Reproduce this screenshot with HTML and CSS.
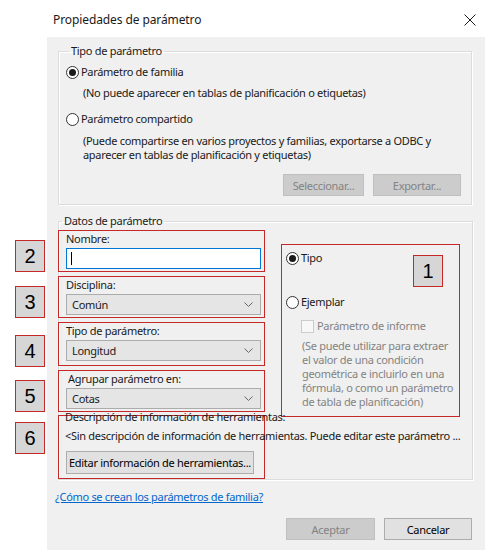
FILE: index.html
```html
<!DOCTYPE html>
<html lang="es">
  <head>
    <title>Propiedades de parámetro</title>
    <meta charset="UTF-8" />
    <meta name="viewport" content="width=device-width, initial-scale=1.0" />
    <link rel="stylesheet" href="styles.css">
  </head>
  <body>
    <div class="dialog">
      <div class="titlebar">
        <span class="title">Propiedades de parámetro</span>
        <svg class="close" width="12" height="12" viewBox="0 0 12 12">
          <path d="M0.5 0.5 L11.5 11.5 M11.5 0.5 L0.5 11.5" stroke="#1a1a1a" stroke-width="1" fill="none" />
        </svg>
      </div>

      <div class="body">
        <!-- Tipo de parámetro -->
        <fieldset class="group group-type">
          <legend>Tipo de parámetro</legend>
          <div class="option"><span class="radio checked"></span>Parámetro de familia</div>
          <p class="note note-first">(No puede aparecer en tablas de planificación o etiquetas)</p>
          <div class="option option-shared"><span class="radio"></span>Parámetro compartido</div>
          <p class="note">(Puede compartirse en varios proyectos y familias, exportarse a ODBC y<br />aparecer en tablas de planificación y etiquetas)</p>
          <div class="actions">
            <button class="btn btn-select" disabled>Seleccionar...</button>
            <button class="btn btn-export" disabled>Exportar...</button>
          </div>
        </fieldset>

        <!-- Datos de parámetro -->
        <fieldset class="group group-data">
          <legend>Datos de parámetro</legend>
          <div class="data-grid">
            <div class="fields">
              <div class="field">
                <span class="badge">2</span>
                <div class="field-label">Nombre:</div>
                <div class="textbox"><span class="caret"></span></div>
              </div>
              <div class="field">
                <span class="badge">3</span>
                <div class="field-label">Disciplina:</div>
                <div class="combo">
                  <span>Común</span>
                  <svg class="chevron" width="9" height="5" viewBox="0 0 9 5"><path d="M0.5 0.5 L4.5 4.5 L8.5 0.5" stroke="#666" fill="none" /></svg>
                </div>
              </div>
              <div class="field field-tall">
                <span class="badge badge-low">4</span>
                <div class="field-label">Tipo de parámetro:</div>
                <div class="combo">
                  <span>Longitud</span>
                  <svg class="chevron" width="9" height="5" viewBox="0 0 9 5"><path d="M0.5 0.5 L4.5 4.5 L8.5 0.5" stroke="#666" fill="none" /></svg>
                </div>
              </div>
              <div class="field">
                <span class="badge">5</span>
                <div class="field-label field-label-shift">Agrupar parámetro en:</div>
                <div class="combo">
                  <span>Cotas</span>
                  <svg class="chevron" width="9" height="5" viewBox="0 0 9 5"><path d="M0.5 0.5 L4.5 4.5 L8.5 0.5" stroke="#666" fill="none" /></svg>
                </div>
              </div>
            </div>

            <div class="kind">
              <span class="badge badge-one">1</span>
              <div class="option"><span class="radio checked"></span>Tipo</div>
              <div class="option option-instance"><span class="radio"></span>Ejemplar</div>
              <div class="check-row"><span class="checkbox"></span>Parámetro de informe</div>
              <p class="kind-note">(Se puede utilizar para extraer<br />el valor de una condición<br />geométrica e incluirlo en una<br />fórmula, o como un parámetro<br />de tabla de planificación)</p>
            </div>
          </div>

          <div class="field field-desc">
            <span class="badge badge-desc">6</span>
            <div class="field-label desc-label">Descripción de información de herramientas:</div>
            <div class="desc-text">&lt;Sin descripción de información de herramientas. Puede editar este parámetro ...</div>
            <button class="btn btn-tooltip">Editar información de herramientas...</button>
          </div>
        </fieldset>

        <a class="help" href="#">¿Cómo se crean los parámetros de familia?</a>

        <div class="footer">
          <button class="btn btn-ok" disabled>Aceptar</button>
          <button class="btn btn-cancel">Cancelar</button>
        </div>
      </div>
    </div>
  </body>
</html>
```

FILE: styles.css
```css
body {
  margin: 0;
  background: #fff;
  font-family: "Noto Sans", "Open Sans", sans-serif;
  font-size: 11px;
  letter-spacing: -0.3px;
  color: #1a1a1a;
}
.dialog {
  margin-left: 47px;
  width: 438px;
}
.titlebar {
  height: 37px;
  display: flex;
  align-items: center;
  justify-content: space-between;
  padding: 0 9px 0 6px;
  background: #fff;
}
.title {
  font-size: 12px;
  letter-spacing: -0.1px;
  margin-top: 2px;
}
.close {
  margin-top: 3px;
}
.body {
  background: #f0f0f0;
  padding: 6px 13px 10px 11px;
}
.group {
  margin: 0;
  border: 1px solid #dcdcdc;
  box-shadow: inset 1px 1px 0 #fff, 1px 1px 0 #fff;
}
.group legend {
  padding: 0 2px;
  margin-left: 3px;
  line-height: 16px;
}
.group-type {
  padding: 5px 10px 8px 7px;
}
.option {
  display: flex;
  align-items: center;
  line-height: 16px;
}
.radio {
  width: 11px;
  height: 11px;
  border: 1px solid #333;
  border-radius: 50%;
  background: #fff;
  margin-right: 2px;
  position: relative;
  flex: none;
}
.radio.checked::after {
  content: "";
  position: absolute;
  left: 2px;
  top: 2px;
  width: 7px;
  height: 7px;
  border-radius: 50%;
  background: #1a1a1a;
}
.note {
  margin: 7px 0 0 17px;
  line-height: 14px;
}
.note-first {
  margin-top: 6px;
  margin-bottom: 11px;
}
.actions,
.footer {
  display: flex;
  justify-content: flex-end;
  gap: 9px;
}
.actions {
  margin-top: 12px;
}
.btn {
  font-family: inherit;
  font-size: 11px;
  letter-spacing: -0.3px;
  height: 22px;
  padding: 0;
  border: 1px solid #adadad;
  background: #e1e1e1;
  color: #000;
}
.btn:disabled {
  border-color: #bfbfbf;
  background: #cccccc;
  color: #838383;
}
.btn-select {
  width: 81px;
}
.btn-export {
  width: 88px;
}
.group-data {
  margin-top: 8px;
  padding: 1px 12px 0 0;
}
.data-grid {
  display: flex;
  gap: 16px;
  margin-left: -1px;
}
.fields {
  width: 207px;
  display: flex;
  flex-direction: column;
  gap: 4px;
}
.field {
  position: relative;
  border: 1px solid #c62828;
  padding: 1px 3px 2px 7px;
}
.field-tall {
  padding-bottom: 4px;
}
.field-label {
  line-height: 14px;
  margin-bottom: 2px;
}
.field-label-shift {
  margin-left: 2px;
}
.badge {
  position: absolute;
  left: -44px;
  top: 9px;
  width: 28px;
  height: 30px;
  border: 1px solid #c62828;
  background: #d6d6d6;
  font-family: "Liberation Sans", Arial, sans-serif;
  font-size: 20px;
  letter-spacing: 0;
  color: #000;
  line-height: 30px;
  text-align: center;
}
.badge-low {
  top: 12px;
}
.badge-one {
  left: auto;
  right: 16px;
  top: 10px;
}
.badge-desc {
  top: 6px;
}
.textbox {
  height: 19px;
  border: 1px solid #0078d7;
  background: #fff;
  display: flex;
  align-items: center;
  padding-left: 4px;
}
.caret {
  width: 1px;
  height: 13px;
  background: #000;
}
.combo {
  height: 19px;
  border: 1px solid #acacac;
  background: #e5e5e5;
  display: flex;
  align-items: center;
  justify-content: space-between;
  padding: 0 7px 0 5px;
}
.kind {
  position: relative;
  width: 173px;
  margin-top: 14px;
  margin-bottom: -5px;
  border: 1px solid #c62828;
  padding: 5px 0 7px 4px;
}
.option-instance {
  margin-top: 28px;
}
.check-row {
  display: flex;
  align-items: center;
  line-height: 16px;
  margin: 8px 0 0 15px;
  color: #838383;
}
.checkbox {
  width: 11px;
  height: 11px;
  border: 1px solid #cccccc;
  background: #f7f7f7;
  margin-right: 3px;
}
.kind-note {
  margin: 5px 0 0 16px;
  line-height: 14px;
  color: #838383;
}
.field-desc {
  width: 195px;
  margin: 3px 0 0 -1px;
  padding: 0 3px 4px 7px;
  white-space: nowrap;
}
.desc-label {
  margin-top: -6px;
  margin-left: -1px;
}
.desc-text {
  line-height: 14px;
  margin: 5px 0 0 -1px;
}
.btn-tooltip {
  margin-top: 8px;
  width: 188px;
  height: 23px;
}
.help {
  display: block;
  margin: 9px 0 0 -3px;
  line-height: 16px;
  color: #0066cc;
}
.footer {
  margin-top: 13px;
}
.btn-ok {
  width: 89px;
}
.btn-cancel {
  width: 88px;
}
```
